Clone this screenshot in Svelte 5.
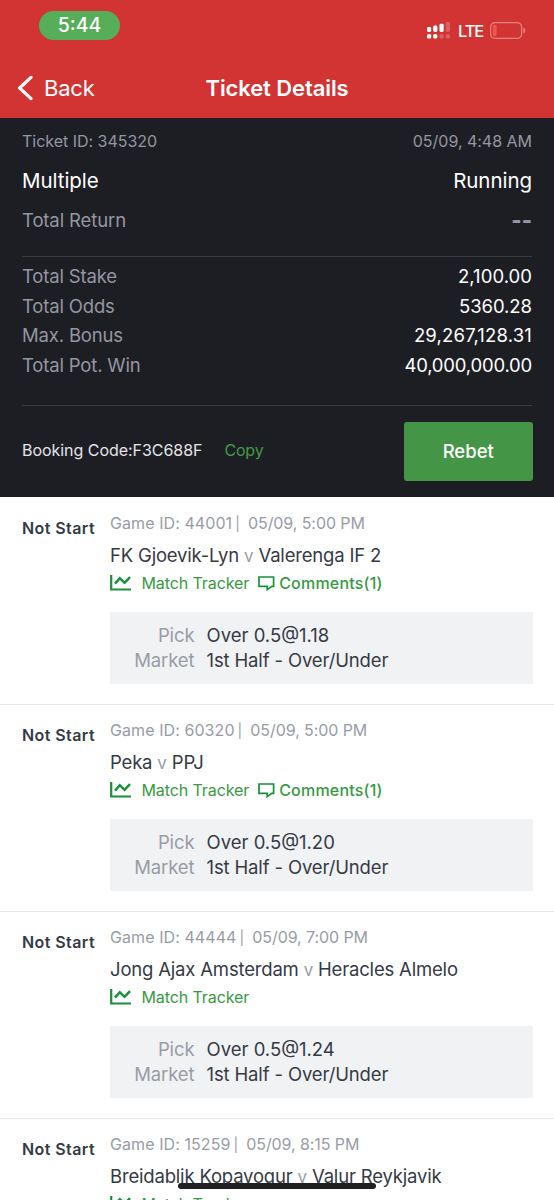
<script>
  const totals = [
    ['Total Stake', '2,100.00', 0.05],
    ['Total Odds', '5360.28', -0.05],
    ['Max. Bonus', '29,267,128.31', 0.17],
    ['Total Pot. Win', '40,000,000.00', -0.2],
  ];

  const games = [
    { id: '44001', time: '05/09, 5:00 PM', home: 'FK Gjoevik-Lyn', away: 'Valerenga IF 2', comments: 1, odds: '1.18' },
    { id: '60320', time: '05/09, 5:00 PM', home: 'Peka', away: 'PPJ', comments: 1, odds: '1.20' },
    { id: '44444', time: '05/09, 7:00 PM', home: 'Jong Ajax Amsterdam', away: 'Heracles Almelo', comments: 0, odds: '1.24' },
    { id: '15259', time: '05/09, 8:15 PM', home: 'Breidablik Kopavogur', away: 'Valur Reykjavik', comments: 0, odds: '1.20' },
  ];
</script>

<div class="screen">
  <header>
    <div class="status">
      <span class="clock">5:44</span>
      <div class="signals">
        <svg class="bars" width="23" height="17" viewBox="0 0 23 17" fill="#fff">
          <rect x="0" y="5" width="4.2" height="5" rx="1.4" />
          <rect x="6.2" y="3.6" width="4.2" height="6.4" rx="1.4" />
          <rect x="12.5" y="1.8" width="4.2" height="8.2" rx="1.4" />
          <rect x="18.8" y="0" width="4.2" height="10" rx="1.4" opacity=".22" />
          <rect x="0" y="12" width="4.2" height="4.6" rx="1.6" />
          <rect x="6.2" y="12" width="4.2" height="4.6" rx="1.6" />
          <rect x="12.5" y="12" width="4.2" height="4.6" rx="1.6" opacity=".22" />
          <rect x="18.8" y="12" width="4.2" height="4.6" rx="1.6" opacity=".22" />
        </svg>
        <span class="lte">LTE</span>
        <svg class="battery" width="36" height="17" viewBox="0 0 36 17">
          <rect x=".6" y=".6" width="31" height="15.8" rx="4.4" fill="none" stroke="#ea8583" stroke-width="1.2" />
          <rect x="2.7" y="2.8" width="4" height="11.4" rx="1.8" fill="#f4524a" />
          <path d="M33.3 5.6c2.6.7 2.6 5.1 0 5.8z" fill="#ea8583" />
        </svg>
      </div>
    </div>
    <nav>
      <a class="back" href="#back">
        <svg width="16" height="26" viewBox="0 0 16 26" fill="none" stroke="#fff" stroke-width="3.2" stroke-linecap="round" stroke-linejoin="round">
          <path d="M14 2.4 2.6 13 14 23.6" />
        </svg>
        <span>Back</span>
      </a>
      <h1>Ticket Details</h1>
    </nav>
  </header>

  <section class="summary">
    <div class="row meta"><span>Ticket ID: 345320</span><span>05/09, 4:48 AM</span></div>
    <div class="row kind"><span>Multiple</span><span>Running</span></div>
    <div class="row return"><span>Total Return</span><span class="dashes">--</span></div>
    <div class="totals">
      {#each totals as [label, value, tracking]}
        <div class="row total"><span>{label}</span><span class="value" style:letter-spacing="{tracking}px">{value}</span></div>
      {/each}
    </div>
    <div class="booking">
      <span class="code">Booking Code:F3C688F</span>
      <a class="copy" href="#copy">Copy</a>
      <button>Rebet</button>
    </div>
  </section>

  <main>
    {#each games as game}
      <article>
        <strong>Not Start</strong>
        <div class="body">
          <div class="game-meta">Game ID: {game.id}<span class="bar">|</span><span class="time">{game.time}</span></div>
          <div class="teams">{game.home} <span>v</span> {game.away}</div>
          <div class="links">
            <svg class="chart" width="22" height="16" viewBox="0 0 22 16" fill="none" stroke="#169239">
              <path d="M1.2 0v14.5H21" stroke-width="2.2" />
              <path d="m5 8.6 4.8-5.4 4.8 4.6 5.4-5.6" stroke-width="2.5" />
            </svg>
            <span class="tracker">Match Tracker</span>
            {#if game.comments}
              <svg class="bubble" width="17" height="15" viewBox="0 0 17 15" fill="none" stroke="#169239" stroke-width="1.7">
                <path d="M1 1h14.6v9.4h-1.8L9.2 13.6V10.4H1z" />
              </svg>
              <span class="comments">Comments({game.comments})</span>
            {/if}
          </div>
          <dl>
            <dt>Pick</dt><dd class="pick">Over 0.5@{game.odds}</dd>
            <dt>Market</dt><dd>1st Half - Over/Under</dd>
          </dl>
        </div>
      </article>
    {/each}
  </main>
  <div class="home-indicator"></div>
</div>

<style>
  :global(body) { margin: 0; }
  .screen {
    position: relative;
    width: 554px;
    height: 1200px;
    overflow: hidden;
    background: #fff;
    font-family: Inter, 'Liberation Sans', sans-serif;
    color: #353a45;
  }
  .screen * { box-sizing: border-box; }
  .screen span, .screen a, .screen strong { white-space: nowrap; }
  a { color: inherit; text-decoration: none; }

  header { height: 118px; background: #d13433; color: #fff; }
  .status { display: flex; justify-content: space-between; height: 58px; padding: 11px 28px 0 39px; }
  .clock {
    width: 81px; height: 29px; border-radius: 15px; background: #57ae58;
    text-align: center; font-size: 19.5px; font-weight: 500; line-height: 29px; letter-spacing: 0;
  }
  .signals { display: flex; align-items: flex-start; padding-top: 11px; }
  .lte { margin: 0 7px 0 8px; width: 25px; font-size: 16.5px; line-height: 18px; letter-spacing: -1.1px; font-weight: 500; }
  nav { display: grid; grid-template-columns: 1fr auto 1fr; align-items: center; height: 60px; padding: 0 0 0 17px; }
  .back { display: flex; align-items: center; gap: 11px; font-size: 22px; letter-spacing: -0.2px; }
  h1 { margin: 0 17px 0 0; font-size: 22px; font-weight: 600; letter-spacing: -0.1px; }

  .summary { height: 379px; padding: 8px 22px 0; background: #1d1e24; color: #9596a1; }
  .row { display: flex; justify-content: space-between; }
  .meta { font-size: 16px; line-height: 30px; letter-spacing: -0.02px; }
  .kind { color: #fff; font-size: 20.5px; line-height: 49px; letter-spacing: -0.05px; }
  .return { height: 51px; font-size: 18.5px; line-height: 31px; letter-spacing: -0.12px; }
  .dashes { font-size: 22px; font-weight: 800; letter-spacing: 0; }
  .totals { height: 150px; padding-top: 5px; border: solid #3a3b41; border-width: 1px 0; }
  .total { font-size: 18.5px; line-height: 29.5px; letter-spacing: -0.17px; }
  .value { color: #fff; }
  .booking { display: flex; align-items: center; height: 91px; font-size: 16px; }
  .code { color: #e4e4e8; letter-spacing: -0.04px; }
  .code, .copy { padding-bottom: 3px; }
  .copy { margin-left: 22px; color: #459946; letter-spacing: -0.2px; }
  button {
    width: 128.5px; height: 59px; margin: 0 -0.5px 0 auto; padding: 0 6px 1px; border: 0; border-radius: 3px; background: #459546;
    color: #fff; font: 500 18.5px Inter, sans-serif;
  }

  main { padding-top: 1px; }
  article { display: flex; height: 207px; padding: 12px 21px 0 22px; border-bottom: 1px solid #e6e7ea; }
  strong { width: 88px; flex: none; font-size: 16px; font-weight: 600; line-height: 36px; letter-spacing: 0.42px; }
  .body { flex: 1; white-space: nowrap; }
  .game-meta { color: #989ca6; font-size: 16px; line-height: 26px; letter-spacing: 0.08px; }
  .bar { display: inline-block; margin: 0 8px 0 3px; font-size: 14px; line-height: 20px; }
  .time { letter-spacing: -0.08px; }
  .teams { font-size: 18.5px; line-height: 38px; letter-spacing: -0.18px; }
  .teams span { color: #989ca6; font-size: 17px; }
  .links { display: flex; align-items: center; height: 16px; color: #389a42; font-size: 16px; }
  .tracker { margin-left: 9.5px; letter-spacing: -0.1px; }
  .bubble { margin-left: 9px; }
  .comments { margin-left: 4px; font-weight: 500; letter-spacing: 0.2px; }
  dl {
    display: grid; grid-template-columns: 84.5px 1fr; column-gap: 12px; align-content: start;
    height: 72px; margin: 21px 0 0; padding-top: 10.5px; background: #f1f2f4;
    font-size: 18.5px; line-height: 25.5px;
  }
  dt { color: #989ca6; text-align: right; letter-spacing: -0.1px; }
  dd { margin: 0; letter-spacing: -0.14px; }
  .pick { letter-spacing: 0; }

  .home-indicator { position: absolute; left: 178px; top: 1183px; width: 198px; height: 6px; border-radius: 3px; background: #202022; }
</style>
